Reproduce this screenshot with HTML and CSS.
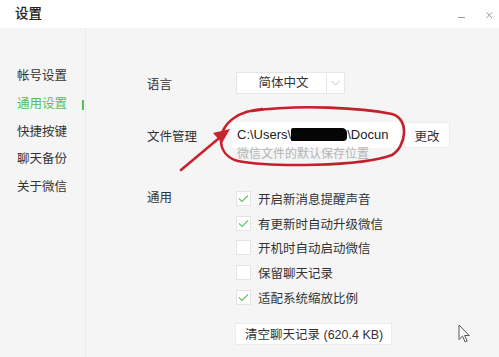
FILE: index.html
```html
<!DOCTYPE html>
<html lang="zh-CN">
<head>
<meta charset="utf-8">
<title>设置</title>
<link rel="stylesheet" href="styles.css">
</head>
<body>
<div class="window">
  <header class="titlebar">
    <span class="title">设置</span>
    <div class="controls">
      <svg class="ctl" width="9" height="9" viewBox="0 0 9 9"><line x1="1" y1="6.5" x2="8" y2="6.5" stroke="#9a9a9a" stroke-width="1"/></svg>
      <svg class="ctl" width="9" height="9" viewBox="0 0 9 9"><path d="M1.5 1.5 L7 7 M7 1.5 L1.5 7" stroke="#9a9a9a" stroke-width="1" fill="none"/></svg>
    </div>
  </header>
  <div class="main">
    <nav class="sidebar">
      <div class="nav-item">帐号设置</div>
      <div class="nav-item active">通用设置</div>
      <div class="nav-item">快捷按键</div>
      <div class="nav-item">聊天备份</div>
      <div class="nav-item">关于微信</div>
    </nav>
    <section class="content">
      <div class="row row-lang">
        <div class="label">语言</div>
        <div class="select">
          <span class="select-value">简体中文</span>
          <span class="select-arrow"><svg width="9" height="6" viewBox="0 0 9 6"><path d="M0.5 0.8 L4.5 5 L8.5 0.8" stroke="#c4c4c4" stroke-width="1" fill="none"/></svg></span>
        </div>
      </div>
      <div class="row row-file">
        <div class="label">文件管理</div>
        <div class="field">
          <div class="path-input">C:\Users\<span class="redact"></span>\Docun</div>
          <button class="btn btn-change">更改</button>
        </div>
      </div>
      <div class="hint">微信文件的默认保存位置</div>
      <div class="row row-general">
        <div class="label">通用</div>
        <ul class="checks">
          <li class="check on"><span class="box"><svg width="11" height="9" viewBox="0 0 11 9"><path d="M1 4.5 L4 7.5 L10 1.5" stroke="#62c462" stroke-width="1.2" fill="none"/></svg></span>开启新消息提醒声音</li>
          <li class="check on"><span class="box"><svg width="11" height="9" viewBox="0 0 11 9"><path d="M1 4.5 L4 7.5 L10 1.5" stroke="#62c462" stroke-width="1.2" fill="none"/></svg></span>有更新时自动升级微信</li>
          <li class="check"><span class="box"></span>开机时自动启动微信</li>
          <li class="check"><span class="box"></span>保留聊天记录</li>
          <li class="check on"><span class="box"><svg width="11" height="9" viewBox="0 0 11 9"><path d="M1 4.5 L4 7.5 L10 1.5" stroke="#62c462" stroke-width="1.2" fill="none"/></svg></span>适配系统缩放比例</li>
        </ul>
      </div>
      <button class="btn btn-clear">清空聊天记录 (620.4 KB)</button>
    </section>
  </div>
  <svg class="annotation" width="499" height="357" viewBox="0 0 499 357">
    <path d="M252 111 C300 104 362 108 392 114 C410 119 406 147 392 155 C360 167 270 167 238 161 C216 155 216 130 234 118 C241 113 250 110 262 109" stroke="#c4202c" stroke-width="2.6" fill="none" stroke-linecap="round"/>
    <path d="M181 170 L224 134" stroke="#c8242e" stroke-width="2.6" fill="none" stroke-linecap="round"/>
    <path d="M230 129 L213 133 L222 143 Z" fill="#c8242e"/>
  </svg>
  <svg class="cursor" width="14" height="20" viewBox="0 0 14 20">
    <path d="M1 1 L1 15.5 L4.5 12.2 L7.2 18 L9.2 17.1 L6.6 11.5 L11.2 11.5 Z" fill="#ffffff" stroke="#555" stroke-width="1"/>
  </svg>
</div>
</body>
</html>
```

FILE: styles.css
```css
* { box-sizing: border-box; }
html, body { margin: 0; padding: 0; }
body {
  width: 499px;
  height: 357px;
  overflow: hidden;
  font-family: "Liberation Sans", "Noto Sans CJK SC", sans-serif;
  color: #333;
  background: #f5f5f5;
}
.window {
  position: relative;
  width: 499px;
  height: 357px;
  background: #f5f5f5;
  display: flex;
  flex-direction: column;
}
.titlebar {
  height: 28px;
  flex: none;
  background: #ffffff;
  display: flex;
  align-items: center;
  justify-content: space-between;
  padding: 0 5px 0 15px;
}
.title {
  font-size: 13.5px;
  font-weight: 500;
  color: #222;
  line-height: 28px;
}
.controls {
  display: flex;
  align-items: center;
  gap: 19px;
  padding-top: 2px;
}
.ctl { display: block; }
.main {
  flex: 1;
  display: flex;
}
.sidebar {
  width: 86px;
  flex: none;
  border-right: 1px solid #ebebeb;
  padding-top: 35px;
}
.nav-item {
  position: relative;
  height: 27.75px;
  line-height: 27.75px;
  padding-left: 17px;
  font-size: 12.5px;
  color: #333;
}
.nav-item.active { color: #52c152; }
.nav-item.active::after {
  content: "";
  position: absolute;
  right: 1px;
  top: 9px;
  width: 2px;
  height: 10px;
  background: #52c152;
}
.content {
  flex: 1;
  padding: 44px 0 0 61px;
  display: flex;
  flex-direction: column;
  align-items: flex-start;
}
.row {
  display: flex;
  align-items: center;
}
.label {
  width: 89px;
  flex: none;
  font-size: 12.5px;
  color: #333;
}
.select {
  display: flex;
  width: 109px;
  height: 22px;
  background: #fff;
  border: 1px solid #e6e6e6;
}
.select-value {
  width: 89px;
  text-align: center;
  font-size: 12.5px;
  line-height: 20px;
  padding-left: 4px;
  color: #333;
}
.select-arrow {
  flex: 1;
  border-left: 1px solid #e6e6e6;
  display: flex;
  align-items: center;
  justify-content: center;
}
.select-arrow svg { display: block; }
.row-file { margin-top: 28px; }
.field {
  display: flex;
  margin-left: -4px;
  gap: 4px;
}
.path-input {
  width: 168px;
  height: 26px;
  background: #fff;
  padding-left: 5px;
  font-size: 13px;
  line-height: 26px;
  white-space: nowrap;
  overflow: hidden;
  color: #222;
}
.redact {
  display: inline-block;
  width: 56px;
  height: 13px;
  vertical-align: -2px;
  background: #050505;
  border-radius: 2px 5px 4px 1px;
}
.btn {
  font-family: "Liberation Sans", "Noto Sans CJK SC", sans-serif;
  background: #fff;
  border: 1px solid #ececec;
  color: #333;
  padding: 0;
  margin: 0;
}
.btn-change {
  width: 46px;
  height: 26px;
  font-size: 12.5px;
}
.hint {
  margin-left: 90px;
  font-size: 12px;
  line-height: 12px;
  color: #b4b4b4;
}
.row-general {
  margin-top: 26px;
  align-items: flex-start;
}
.row-general .label { line-height: 24.7px; }
.checks {
  list-style: none;
  margin: 0;
  padding: 0;
}
.check {
  height: 24.7px;
  display: flex;
  align-items: center;
  font-size: 12.5px;
  color: #333;
}
.box {
  width: 15px;
  height: 15px;
  background: #fff;
  border: 1px solid #e4e4e4;
  margin-right: 7px;
  display: flex;
  align-items: center;
  justify-content: center;
}
.box svg { display: block; }
.btn-clear {
  margin-top: 13.5px;
  margin-left: 88px;
  width: 157px;
  height: 22px;
  font-size: 12.5px;
  text-align: left;
  padding-left: 9px;
}
.annotation {
  position: absolute;
  left: 0;
  top: 0;
  pointer-events: none;
}
.cursor {
  position: absolute;
  left: 458px;
  top: 324px;
  pointer-events: none;
}
```
